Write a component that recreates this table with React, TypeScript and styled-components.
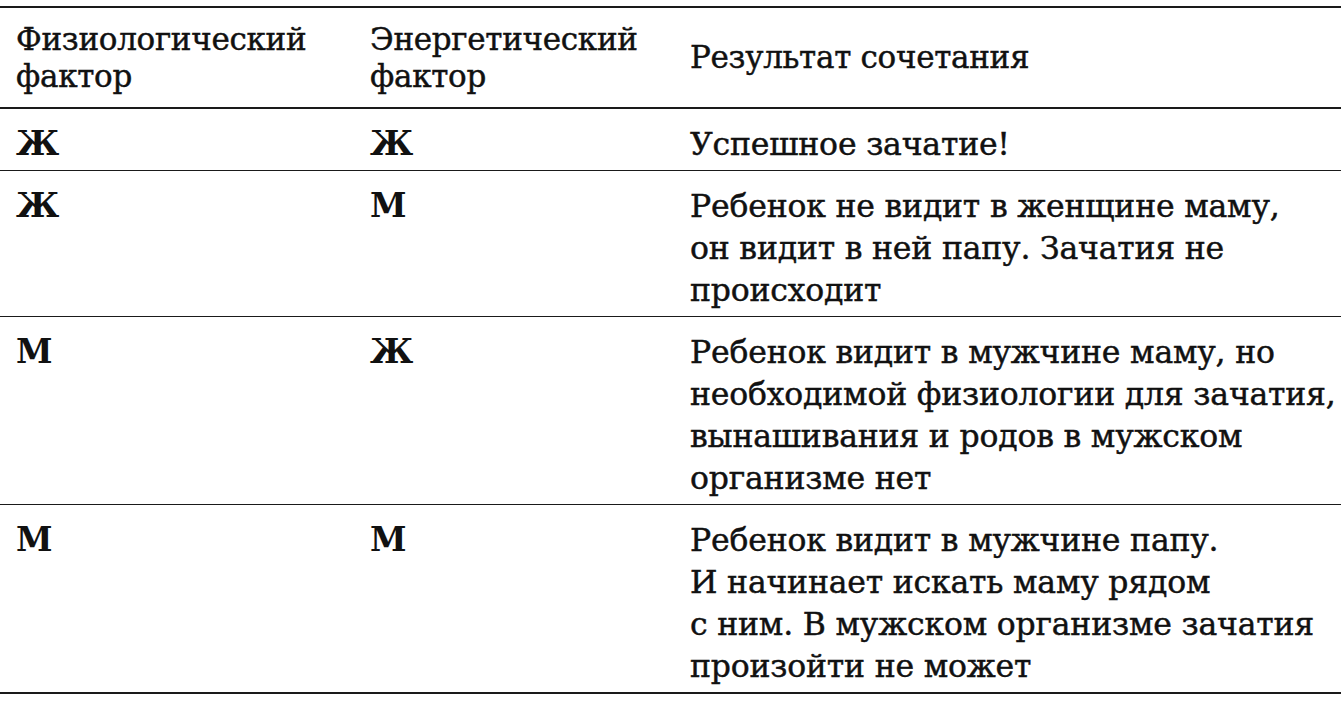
import React from 'react';
import styled, { createGlobalStyle } from 'styled-components';

const GlobalStyle = createGlobalStyle`
  html, body {
    margin: 0;
    padding: 0;
    background: #fff;
  }
  body {
    font-family: 'DejaVu Serif', 'Liberation Serif', serif;
    color: #111;
    -webkit-text-stroke: 0.45px #111;
  }
`;

interface Combination {
  physio: string;
  energy: string;
  result: string[];
}

const rows: Combination[] = [
  { physio: 'Ж', energy: 'Ж', result: ['Успешное зачатие!'] },
  {
    physio: 'Ж',
    energy: 'М',
    result: ['Ребенок не видит в женщине маму,', 'он видит в ней папу. Зачатия не', 'происходит'],
  },
  {
    physio: 'М',
    energy: 'Ж',
    result: [
      'Ребенок видит в мужчине маму, но',
      'необходимой физиологии для зачатия,',
      'вынашивания и родов в мужском',
      'организме нет',
    ],
  },
  {
    physio: 'М',
    energy: 'М',
    result: [
      'Ребенок видит в мужчине папу.',
      'И начинает искать маму рядом',
      'с ним. В мужском организме зачатия',
      'произойти не может',
    ],
  },
];

export default function App() {
  return (
    <>
      <GlobalStyle />
      <TableCss>
        <HeadRowCss>
          <HeadCellCss>
            Физиологический
            <br />
            фактор
          </HeadCellCss>
          <HeadCellCss>
            Энергетический
            <br />
            фактор
          </HeadCellCss>
          <HeadCellCss>Результат сочетания</HeadCellCss>
        </HeadRowCss>
        {rows.map((row, i) => (
          <RowCss key={i} $last={i === rows.length - 1}>
            <FactorCss>{row.physio}</FactorCss>
            <FactorCss>{row.energy}</FactorCss>
            <ResultCss>
              {row.result.map((line, j) => (
                <div key={j}>{line}</div>
              ))}
            </ResultCss>
          </RowCss>
        ))}
      </TableCss>
    </>
  );
}

const TableCss = styled.div`
  margin-top: 6px;
  width: 100%;
  overflow: hidden;
  border-top: 2px solid #1a1a1a;
`;

const HeadRowCss = styled.div`
  display: grid;
  grid-template-columns: 354px 320px 1fr;
  align-items: center;
  height: 99px;
  padding-left: 16px;
  border-bottom: 2px solid #1a1a1a;
`;

const HeadCellCss = styled.div`
  font-size: 31px;
  line-height: 37px;
  letter-spacing: -0.3px;
`;

const RowCss = styled.div<{ $last?: boolean }>`
  display: grid;
  grid-template-columns: 354px 320px minmax(0, 1fr);
  padding: 14px 0 5px 16px;
  border-bottom: ${p => (p.$last ? '2px' : '1.5px')} solid #1a1a1a;
`;

const FactorCss = styled.div`
  font-size: 33px;
  line-height: 42px;
  font-weight: bold;
  -webkit-text-stroke: 0;
`;

const ResultCss = styled.div`
  font-size: 31.5px;
  line-height: 42px;
  letter-spacing: -0.2px;
  white-space: nowrap;
`;
